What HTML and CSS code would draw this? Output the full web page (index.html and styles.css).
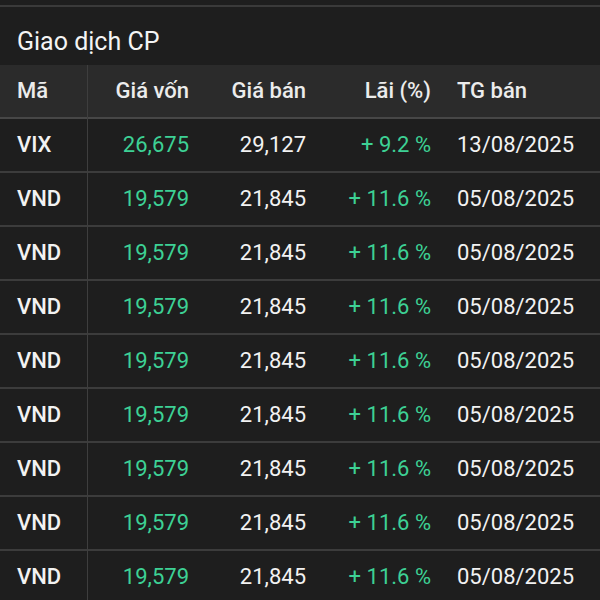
FILE: index.html
```html
<!DOCTYPE html>
<html lang="vi">
<head>
<meta charset="utf-8">
<link rel="stylesheet" href="styles.css">
</head>
<body>
<div class="topbar"></div>
<div class="title">Giao dịch CP</div>
<div class="table">
  <div class="row head">
    <div class="c c1">Mã</div><div class="c c2">Giá vốn</div><div class="c c3">Giá bán</div><div class="c c4">Lãi (%)</div><div class="c c5">TG bán</div>
  </div>
  <div class="row">
    <div class="c c1 sym">VIX</div><div class="c c2 green">26,675</div><div class="c c3">29,127</div><div class="c c4 green">+ 9.2 %</div><div class="c c5">13/08/2025</div>
  </div>
  <div class="row">
    <div class="c c1 sym">VND</div><div class="c c2 green">19,579</div><div class="c c3">21,845</div><div class="c c4 green">+ 11.6 %</div><div class="c c5">05/08/2025</div>
  </div>
  <div class="row">
    <div class="c c1 sym">VND</div><div class="c c2 green">19,579</div><div class="c c3">21,845</div><div class="c c4 green">+ 11.6 %</div><div class="c c5">05/08/2025</div>
  </div>
  <div class="row">
    <div class="c c1 sym">VND</div><div class="c c2 green">19,579</div><div class="c c3">21,845</div><div class="c c4 green">+ 11.6 %</div><div class="c c5">05/08/2025</div>
  </div>
  <div class="row">
    <div class="c c1 sym">VND</div><div class="c c2 green">19,579</div><div class="c c3">21,845</div><div class="c c4 green">+ 11.6 %</div><div class="c c5">05/08/2025</div>
  </div>
  <div class="row">
    <div class="c c1 sym">VND</div><div class="c c2 green">19,579</div><div class="c c3">21,845</div><div class="c c4 green">+ 11.6 %</div><div class="c c5">05/08/2025</div>
  </div>
  <div class="row">
    <div class="c c1 sym">VND</div><div class="c c2 green">19,579</div><div class="c c3">21,845</div><div class="c c4 green">+ 11.6 %</div><div class="c c5">05/08/2025</div>
  </div>
  <div class="row">
    <div class="c c1 sym">VND</div><div class="c c2 green">19,579</div><div class="c c3">21,845</div><div class="c c4 green">+ 11.6 %</div><div class="c c5">05/08/2025</div>
  </div>
  <div class="row">
    <div class="c c1 sym">VND</div><div class="c c2 green">19,579</div><div class="c c3">21,845</div><div class="c c4 green">+ 11.6 %</div><div class="c c5">05/08/2025</div>
  </div>
</div>
</body>
</html>
```
FILE: styles.css
```css
html, body {
  margin: 0;
  padding: 0;
  background: #1e1e1e;
  color: #f2f2f2;
  font-family: Roboto, "Noto Sans", sans-serif;
  overflow: hidden;
}
.topbar {
  height: 5px;
  border-bottom: 2px solid #3a3a3a;
}
.title {
  height: 47px;
  padding-top: 11px;
  display: flex;
  align-items: center;
  padding-left: 17px;
  font-size: 25px;
  color: #f4f4f4;
}
.row {
  display: grid;
  grid-template-columns: 88px 112px 117px 125px 1fr;
  height: 52px;
  border-bottom: 2px solid #3c3c3c;
  font-size: 22px;
}
.row.head {
  background: #2b2b2b;
  border-bottom: 2px solid #474747;
  font-weight: 500;
  color: #ececec;
}
.c {
  display: flex;
  align-items: center;
  white-space: nowrap;
  padding-bottom: 2px;
}
.c1 {
  padding-left: 17px;
  border-right: 1px solid #3e3e3e;
  margin-bottom: -2px;
  padding-bottom: 4px;
}
.c2, .c3, .c4 {
  justify-content: flex-end;
  padding-right: 11px;
}
.c5 {
  padding-left: 15px;
}
.sym {
  font-weight: 500;
}
.green {
  color: #3dd195;
}
```
